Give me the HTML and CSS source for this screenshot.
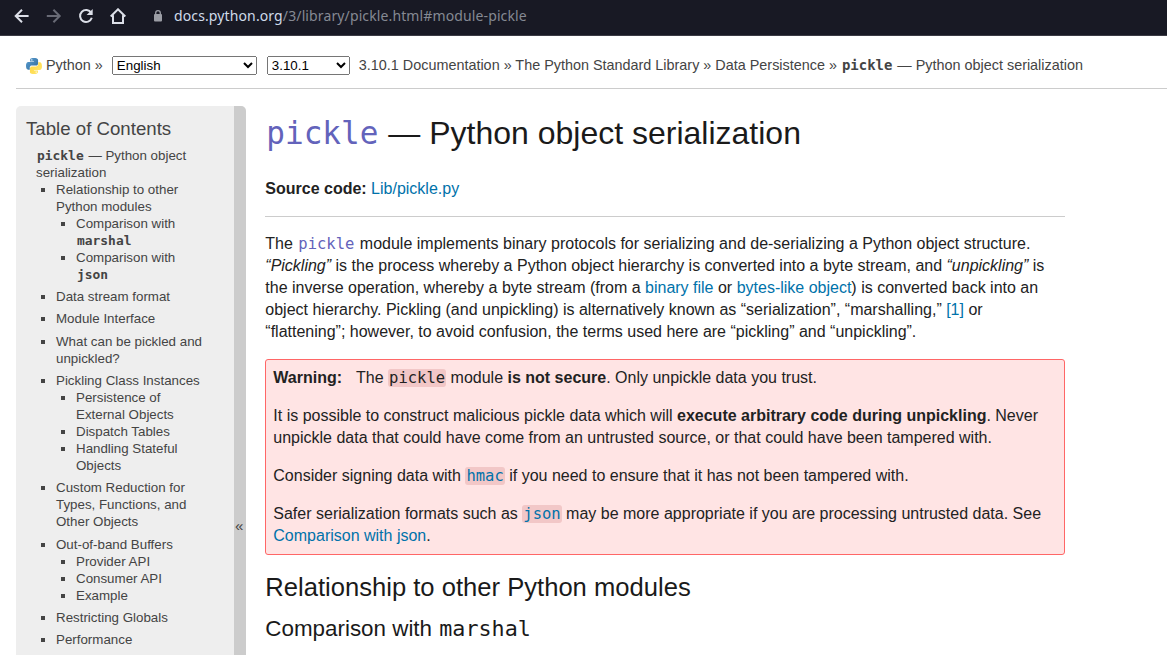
FILE: index.html
```html
<!DOCTYPE html>
<html lang="en">
<head>
<meta charset="utf-8">
<title>pickle — Python object serialization</title>
<link rel="stylesheet" href="styles.css">
</head>
<body>
<header class="browser">
  <svg class="tool back" width="16" height="16" viewBox="0 0 16 16"><path d="M14.6 8H2M8 1.7 1.7 8 8 14.3"/></svg>
  <svg class="tool forward" width="16" height="16" viewBox="0 0 16 16"><path d="M.8 8h12.6M7.4 1.7 13.7 8l-6.3 6.3"/></svg>
  <svg class="tool reload" width="16" height="16" viewBox="0 0 16 16"><path d="M13.2 4.8A6 6 0 1 0 13.8 9.8"/><path class="solid" d="M14.7 1v6.1H8.6z"/></svg>
  <svg class="tool home" width="16" height="16" viewBox="0 0 16 16"><path d="M.7 8.5 8 1.3l7.3 7.2M3 7.2v7.9h10V7.2"/></svg>
  <svg class="lock" width="8" height="12" viewBox="0 0 8 12"><path class="shackle" d="M1.7 5V3a2.3 2.3 0 0 1 4.6 0v2"/><rect y="4" width="8" height="7.5" rx="1"/></svg>
  <div class="address">docs.python.org<span>/3/library/pickle.html#module-pickle</span></div>
</header>
<nav class="related">
  <svg class="logo" width="16" height="16" viewBox="0 0 110 110">
    <defs>
      <linearGradient id="blue" x1="0" y1="0" x2="1" y2="1"><stop offset="0" stop-color="#5a9fd4"/><stop offset="1" stop-color="#306998"/></linearGradient>
      <linearGradient id="yellow" x1="0" y1="0" x2="1" y2="1"><stop offset="0" stop-color="#ffd43b"/><stop offset="1" stop-color="#ffe873"/></linearGradient>
    </defs>
    <path fill="url(#blue)" d="M54 0C27 0 28 12 28 12v12h27v4H18S0 26 0 54s16 27 16 27h10V68s-1-16 16-16h26s15 0 15-15V14S85 0 54 0zM40 8a5 5 0 1 1 0 10 5 5 0 0 1 0-10z"/>
    <path fill="url(#yellow)" d="M56 110c27 0 26-12 26-12V86H55v-4h37s18 2 18-26-16-27-16-27H84v13s1 16-16 16H42s-15 0-15 15v23s-2 14 29 14zM70 102a5 5 0 1 1 0-10 5 5 0 0 1 0 10z"/>
  </svg>
  <a>Python</a><span class="sep">»</span>
  <select class="language"><option>English</option></select>
  <select class="version"><option>3.10.1</option></select>
  <span class="crumbs">3.10.1 Documentation » The Python Standard Library » Data Persistence » <code>pickle</code> — Python object serialization</span>
</nav>
<div class="document">
  <aside class="sidebar">
    <div class="toc">
      <h3>Table of Contents</h3>
      <div class="root"><code>pickle</code> — Python object serialization
        <ul>
          <li>Relationship to other Python modules
            <ul><li>Comparison with <code>marshal</code></li><li>Comparison with <code>json</code></li></ul>
          </li>
          <li>Data stream format</li>
          <li>Module Interface</li>
          <li>What can be pickled and unpickled?</li>
          <li>Pickling Class Instances
            <ul><li>Persistence of External Objects</li><li>Dispatch Tables</li><li>Handling Stateful Objects</li></ul>
          </li>
          <li>Custom Reduction for Types, Functions, and Other Objects</li>
          <li>Out-of-band Buffers
            <ul><li>Provider API</li><li>Consumer API</li><li>Example</li></ul>
          </li>
          <li>Restricting Globals</li>
          <li>Performance</li>
        </ul>
      </div>
    </div>
    <div class="collapse">«</div>
  </aside>
  <main class="body">
    <h1><code>pickle</code> — Python object serialization</h1>
    <p class="source"><strong>Source code:</strong> <a>Lib/pickle.py</a></p>
    <hr>
    <p class="intro">The <code class="module">pickle</code> module implements binary protocols for serializing and de-serializing a Python object structure. <em>“Pickling”</em> is the process whereby a Python object hierarchy is converted into a byte stream, and <em>“unpickling”</em> is the inverse operation, whereby a byte stream (from a <a>binary file</a> or <a>bytes-like object</a>) is converted back into an object hierarchy. Pickling (and unpickling) is alternatively known as “serialization”, “marshalling,” <a>[1]</a> or “flattening”; however, to avoid confusion, the terms used here are “pickling” and “unpickling”.</p>
    <section class="warning">
      <p><strong class="label">Warning:</strong>The <code>pickle</code> module <strong>is not secure</strong>. Only unpickle data you trust.</p>
      <p>It is possible to construct malicious pickle data which will <strong>execute arbitrary code during unpickling</strong>. Never unpickle data that could have come from an untrusted source, or that could have been tampered with.</p>
      <p>Consider signing data with <a><code>hmac</code></a> if you need to ensure that it has not been tampered with.</p>
      <p>Safer serialization formats such as <a><code>json</code></a> may be more appropriate if you are processing untrusted data. See <a>Comparison with json</a>.</p>
    </section>
    <h2>Relationship to other Python modules</h2>
    <h3>Comparison with <code>marshal</code></h3>
  </main>
</div>
</body>
</html>
```

FILE: styles.css
```css
* { box-sizing: border-box; }
html, body { height: 100%; }
body {
  margin: 0;
  display: flex;
  flex-direction: column;
  overflow: hidden;
  background: #fff;
  color: #222;
  font: 16px/22px "Liberation Sans", Arial, sans-serif;
}
h1, h2, h3, p, ul { margin: 0; padding: 0; font-weight: normal; }
a { color: #0072aa; }
code { font-family: "DejaVu Sans Mono", monospace; font-size: 0.97em; line-height: 1; padding: 0 1px; }

.browser {
  flex: none;
  display: flex;
  align-items: center;
  height: 36px;
  padding: 0 14px 4px;
  background: #181924;
  border-bottom: 1px solid #3b3b44;
}
.tool { flex: none; margin-right: 16px; fill: none; stroke: #dcdfe8; stroke-width: 2; }
.tool .solid { fill: #dcdfe8; stroke: none; }
.forward { stroke: #686a75; }
.home { margin-right: 28px; }
.lock { flex: none; margin-right: 12px; fill: #9b9da5; }
.shackle { fill: none; stroke: #9b9da5; stroke-width: 1.3; }
.address { color: #cfdbea; font: 14px/20px "Noto Sans", sans-serif; letter-spacing: 0.12px; white-space: nowrap; }
.address span { color: #858993; }

.related {
  flex: none;
  display: flex;
  align-items: center;
  height: 53px;
  margin-left: 16px;
  padding: 6px 0 0 10px;
  border-bottom: 1px solid #ccc;
  color: #444;
  font-size: 14.4px;
  white-space: nowrap;
}
.related a { color: #444; margin-left: 4px; }
.logo { flex: none; margin-top: 2px; }
.sep { margin: 0 9px 0 4px; }
.related select { height: 19px; margin: 0; font: 13.333px "Liberation Sans", Arial, sans-serif; }
.language { width: 145px; }
.related .version { width: 83px; margin: 0 9px 0 10px; }
.related code { font-weight: bold; }

.document { flex: 1; min-height: 0; display: flex; padding: 17px 0 0 16px; }
.sidebar {
  flex: none;
  display: flex;
  width: 230px;
  border-radius: 5px 5px 0 0;
  overflow: hidden;
  background: #eee;
  color: #444;
  font-size: 13.333px;
  line-height: 17px;
}
.toc { flex: 1; padding: 10px 30px 0 10px; }
.toc h3 { font-size: 18.667px; line-height: 26px; margin: 0 -20px 4.75px 0; }
.root { padding-left: 10px; }
.toc code { font-weight: bold; }
.toc ul { list-style: square; padding-left: 20px; }
.root > ul > li + li { margin-top: 5.33px; }
.collapse { flex: none; width: 12px; padding: 411px 0 0 1px; background: #ccc; font-size: 15px; }

.body { flex: none; width: 800px; margin-left: 19.3px; }
h1 { font-size: 32px; line-height: 45px; margin-top: 5px; color: #1a1a1a; }
h1 code, .module { color: #6363bb; }
.source { margin-top: 22px; }
hr { margin: 16px 0; border: 0; border-top: 1px solid #ccc; }
.warning {
  display: grid;
  gap: 16px;
  margin-top: 16px;
  padding: 7px;
  border: 1px solid #f66;
  border-radius: 3px;
  background: #ffe4e4;
}
.label { margin-right: 14px; }
.warning code { background: rgba(170, 34, 34, 0.15); border-radius: 3px; }
h2 { font-size: 25.6px; line-height: 36px; margin-top: 14px; color: #1a1a1a; }
.body h3 { font-size: 22.4px; line-height: 32px; margin-top: 8px; color: #1a1a1a; }
```
